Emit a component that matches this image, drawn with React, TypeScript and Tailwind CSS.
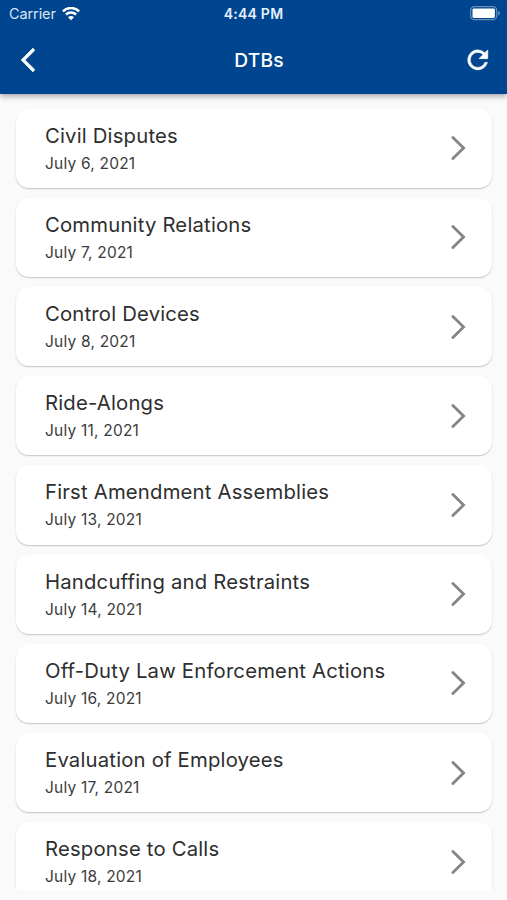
interface Bulletin {
  title: string;
  date: string;
}

const bulletins: Bulletin[] = [
  { title: "Civil Disputes", date: "July 6, 2021" },
  { title: "Community Relations", date: "July 7, 2021" },
  { title: "Control Devices", date: "July 8, 2021" },
  { title: "Ride-Alongs", date: "July 11, 2021" },
  { title: "First Amendment Assemblies", date: "July 13, 2021" },
  { title: "Handcuffing and Restraints", date: "July 14, 2021" },
  { title: "Off-Duty Law Enforcement Actions", date: "July 16, 2021" },
  { title: "Evaluation of Employees", date: "July 17, 2021" },
  { title: "Response to Calls", date: "July 18, 2021" },
];

function WifiIcon() {
  return (
    <svg width="18" height="14" viewBox="0 0.6 18 14" fill="none" stroke="currentColor" strokeWidth="2.5">
      <path d="M0.9 4.9a11.6 11.6 0 0 1 16.2 0" />
      <path d="M3.9 8.1a7.3 7.3 0 0 1 10.2 0" />
      <path d="M9 13.9 6 10.8a4.1 4.1 0 0 1 6 0Z" fill="currentColor" stroke="none" />
    </svg>
  );
}

function BatteryIcon() {
  return (
    <svg width="31" height="15" viewBox="0 0 31 15" fill="none">
      <rect x="0.7" y="0.7" width="26" height="13" rx="3.6" stroke="#fff" strokeOpacity="0.4" strokeWidth="1.2" />
      <rect x="2.5" y="2.4" width="22.4" height="9.6" rx="1.4" fill="#fff" />
      <path d="M28.2 4.7v5c1-.4 1.8-1.3 1.8-2.5s-.8-2.1-1.8-2.5Z" fill="#fff" fillOpacity="0.4" />
    </svg>
  );
}

function StatusBar() {
  return (
    <div className="grid h-[27px] grid-cols-[1fr_auto_1fr] items-center pr-[6px] pl-[9px]">
      <div className="flex items-center gap-[6px] text-[14.5px] tracking-[-0.1px] text-[#d8e5f5]">
        <span>Carrier</span>
        <span className="text-white">
          <WifiIcon />
        </span>
      </div>
      <span className="pr-[3px] text-center text-[14px] font-semibold tracking-[0.25px] text-[#e6f0fb]">4:44 PM</span>
      <div className="flex justify-end">
        <BatteryIcon />
      </div>
    </div>
  );
}

function NavBar() {
  return (
    <div className="grid h-[66px] grid-cols-3 items-center pr-[14px] pl-[21px]">
      <button type="button" aria-label="Back" className="w-fit">
        <svg
          width="14"
          height="24"
          viewBox="0 2.1 11.67 19.8"
          fill="currentColor"
          stroke="currentColor"
          strokeWidth="0.4"
        >
          <path d="M11.67 3.87 9.9 2.1 0 12l9.9 9.9 1.77-1.77L3.54 12z" />
        </svg>
      </button>
      <h1 className="pl-[4px] text-center text-[19.2px] font-medium tracking-[0.2px]">DTBs</h1>
      <button type="button" aria-label="Refresh" className="justify-self-end">
        <svg
          width="30"
          height="30"
          viewBox="0.2 0.1 24 24"
          fill="currentColor"
          stroke="currentColor"
          strokeWidth="0.5"
        >
          <path d="M17.65 6.35A7.96 7.96 0 0 0 12 4a8 8 0 1 0 7.73 10h-2.08A6 6 0 1 1 12 6c1.66 0 3.14.69 4.22 1.78L13 11h7V4l-2.35 2.35z" />
        </svg>
      </button>
    </div>
  );
}

function BulletinCard({ title, date }: Bulletin) {
  return (
    <li className="flex h-[79.2px] shrink-0 items-center justify-between rounded-[13px] bg-white pr-[25px] pl-[29px] shadow-[0_1px_1.5px_rgba(0,0,0,0.22)]">
      <div className="pt-[3px]">
        <p className="text-[20.3px] leading-[27px] tracking-[0.19px] text-[#2e2e2e]">{title}</p>
        <p className="text-[15.5px] leading-[29px] tracking-[0.21px] text-[#3c3c3c]">{date}</p>
      </div>
      <svg width="16" height="26" viewBox="0.7 0 16 26" fill="none" stroke="#858585" strokeWidth="2.8">
        <path d="M2.6 2.4 13.3 13 2.6 23.6" strokeLinecap="round" />
      </svg>
    </li>
  );
}

export default function App() {
  return (
    <div className="flex h-[900px] w-[507px] flex-col overflow-hidden bg-[#fafafa] font-['Inter',sans-serif]">
      <header className="z-10 h-[94px] shrink-0 bg-[#00458f] text-white shadow-[0_2px_6px_rgba(0,0,0,0.36)]">
        <StatusBar />
        <NavBar />
      </header>
      <ul className="flex h-[796px] shrink-0 flex-col gap-[10px] overflow-hidden pt-[14.6px] pr-[15px] pl-[16px]">
        {bulletins.map((bulletin) => (
          <BulletinCard key={bulletin.title} {...bulletin} />
        ))}
      </ul>
    </div>
  );
}
